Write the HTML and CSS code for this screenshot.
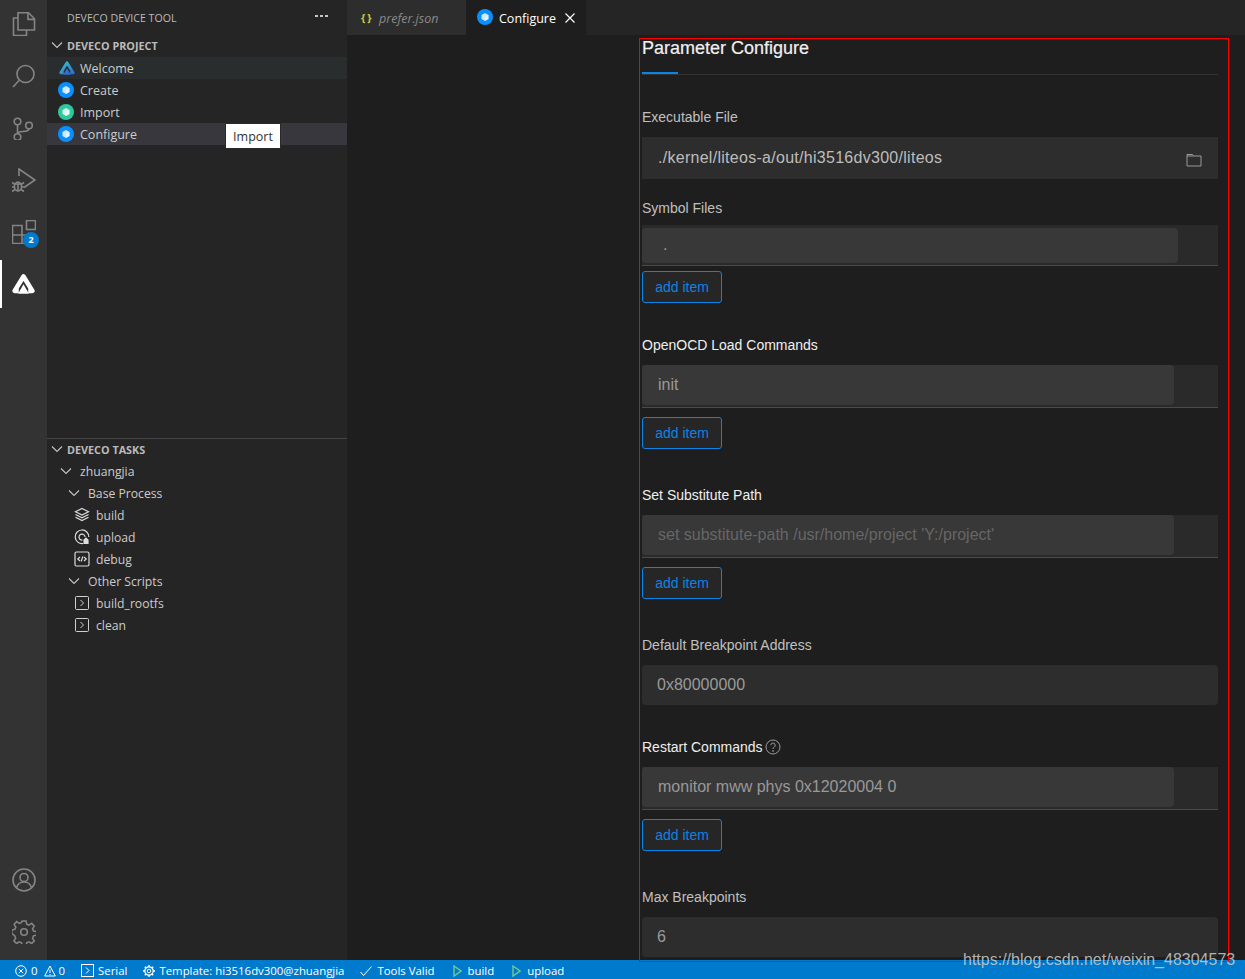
FILE: index.html
```html
<!DOCTYPE html>
<html lang="en">
<head>
<meta charset="utf-8">
<title>Configure</title>
<link rel="stylesheet" href="styles.css">
</head>
<body>
<svg class="defs" width="0" height="0" aria-hidden="true">
  <defs>
    <linearGradient id="logo-grad" x1="0" y1="0" x2="1" y2="1">
      <stop offset="0" stop-color="#35c2c9"/>
      <stop offset="1" stop-color="#2f6fd6"/>
    </linearGradient>
    <symbol id="cube" viewBox="0 0 16 16">
      <path d="M8 4l3.500 2v4L8 12 4.500 10V6z" fill="#fff" fill-opacity=".8"/>
      <path d="M8 8l3.500-2v4L8 12z" fill="#fff" fill-opacity=".45"/>
    </symbol>
    <symbol id="chev" viewBox="0 0 16 16">
      <path d="M3 5.500l5 5 5-5" fill="none" stroke="#c5c5c5" stroke-width="1.100"/>
    </symbol>
    <symbol id="script" viewBox="0 0 16 16">
      <rect x="1.500" y="1.500" width="13" height="13" rx="1" fill="none" stroke="#d0d0d0"/>
      <path d="M6.500 5l3 3-3 3" fill="none" stroke="#d0d0d0"/>
    </symbol>
  </defs>
</svg>
<div class="app">
  <nav class="activity">
    <div class="act-group">
      <div class="act-item">
        <svg class="act-icon" viewBox="0 0 24 24"><path d="M6 6H1.500v17.500h13V18"/><path d="M6 .8h10.500l6 6V18H6z"/><path d="M16 .8v6.600h6.500"/></svg>
      </div>
      <div class="act-item">
        <svg class="act-icon" viewBox="0 0 24 24"><circle cx="13.500" cy="10" r="8.500"/><path d="M7.500 16L1 23"/></svg>
      </div>
      <div class="act-item">
        <svg class="act-icon" viewBox="0 0 24 24"><circle cx="5.500" cy="5.500" r="3.300"/><circle cx="5.500" cy="21" r="3.300"/><circle cx="17" cy="9.500" r="3.300"/><path d="M5.500 8.800v8.900"/><path d="M17 12.800c0 4.600-11.500 1-11.500 5"/></svg>
      </div>
      <div class="act-item">
        <svg class="act-icon" viewBox="0 0 24 24"><path d="M7 8V1l16 11-11 7.500"/><ellipse cx="6" cy="18.500" rx="3.600" ry="4.400"/><path d="M0 14.500l3 2M12 14.500l-3 2M0 19h2.500M12 19H9.500M0 23.500l3-2M12 23.500l-3-2M2.500 16h7M6 16v7"/></svg>
      </div>
      <div class="act-item act-ext">
        <svg class="act-icon" viewBox="0 0 24 24"><path d="M.5 5.500h9.500v9.500H.5zM.5 15h9.500v8.500H.5zM10 15h9.500v8.500H10z"/><rect x="14.500" y=".5" width="9" height="9"/></svg>
        <span class="badge">2</span>
      </div>
      <div class="act-item is-active">
        <svg class="act-logo" viewBox="1 1.500 22 18.500"><path d="M7.500 17.300H3.500L12 3.500 20.500 17.300H16.500" fill="none" stroke="#fff" stroke-width="4.400" stroke-linejoin="round"/><path d="M12 11l5.200 9H6.800z" fill="#fff"/></svg>
      </div>
    </div>
    <div class="act-group">
      <div class="act-item">
        <svg class="act-icon" viewBox="0 0 24 24"><circle cx="12" cy="12" r="11"/><circle cx="12" cy="9.500" r="4"/><path d="M4.500 20c1-4 4-6 7.500-6s6.500 2 7.500 6"/></svg>
      </div>
      <div class="act-item">
        <svg class="act-icon" viewBox="0 0 24 24"><path d="M10 1h4l.7 3.300 2.300 1 2.900-1.800 2.700 2.800-1.800 2.800 1 2.400 3.200.7v3.600l-3.200.7-1 2.400 1.800 2.800-2.700 2.800-2.900-1.800-2.300 1-.7 3.200h-4l-.7-3.200-2.300-1-2.900 1.800-2.700-2.800 1.800-2.800-1-2.400L-.8 14v-3.600l3.200-.7 1-2.400-1.800-2.800 2.700-2.800L7 3.500l2.300-1z" transform="translate(0 -.4) scale(.96) translate(.6 .4)"/><circle cx="12" cy="12" r="3.300"/></svg>
      </div>
    </div>
  </nav>

  <aside class="sidebar">
    <header class="side-title">
      <span>DEVECO DEVICE TOOL</span>
      <span class="dots"><i></i><i></i><i></i></span>
    </header>
    <section class="pane pane-project">
      <div class="pane-head"><svg class="chev"><use href="#chev"/></svg>DEVECO PROJECT</div>
      <div class="row row-l1 is-hover">
        <svg class="logo-small" viewBox="1 1.500 22 18.500"><path d="M7.500 17.300H3.500L12 3.500 20.500 17.300H16.500" fill="none" stroke="url(#logo-grad)" stroke-width="4" stroke-linejoin="round"/><path d="M12 11l5.200 9H6.800z" fill="#2f6fd6"/></svg>
        <span>Welcome</span>
      </div>
      <div class="row row-l1">
        <span class="dot dot-blue"><svg><use href="#cube"/></svg></span><span>Create</span>
      </div>
      <div class="row row-l1">
        <span class="dot dot-green"><svg><use href="#cube"/></svg></span><span>Import</span>
      </div>
      <div class="row row-l1 is-selected">
        <span class="dot dot-blue"><svg><use href="#cube"/></svg></span><span>Configure</span>
      </div>
    </section>
    <section class="pane pane-tasks">
      <div class="pane-head"><svg class="chev"><use href="#chev"/></svg>DEVECO TASKS</div>
      <div class="row row-t1"><svg class="chev"><use href="#chev"/></svg><span>zhuangjia</span></div>
      <div class="row row-t2"><svg class="chev"><use href="#chev"/></svg><span>Base Process</span></div>
      <div class="row row-t3">
        <svg class="task-icon" viewBox="0 0 16 16"><path d="M8 1.500l6.500 3.300L8 8 1.500 4.800zM1.500 7.500L8 10.800l6.500-3.300M1.500 10.300L8 13.600l6.500-3.300"/></svg>
        <span>build</span>
      </div>
      <div class="row row-t3">
        <svg class="task-icon" viewBox="0 0 16 16"><path d="M9 14.500A6.800 6.800 0 1 1 14.800 8"/><path d="M8.500 11A3 3 0 1 1 11 8"/><path d="M10 11l2-2 2 2v3.500h-4z" class="task-fill"/></svg>
        <span>upload</span>
      </div>
      <div class="row row-t3">
        <svg class="task-icon" viewBox="0 0 16 16"><rect x="1" y="1" width="14" height="14" rx="1.500"/><path d="M6 6L3.800 8 6 10M10 6l2.200 2L10 10M8.800 5.500L7.200 10.500"/></svg>
        <span>debug</span>
      </div>
      <div class="row row-t2"><svg class="chev"><use href="#chev"/></svg><span>Other Scripts</span></div>
      <div class="row row-t3"><svg class="script-icon"><use href="#script"/></svg><span>build_rootfs</span></div>
      <div class="row row-t3"><svg class="script-icon"><use href="#script"/></svg><span>clean</span></div>
    </section>
    <div class="tooltip">Import</div>
  </aside>

  <main class="editor">
    <div class="tabs">
      <div class="tab tab-preview"><span class="braces">{ }</span><span class="tab-name">prefer.json</span></div>
      <div class="tab tab-active">
        <span class="dot dot-blue"><svg><use href="#cube"/></svg></span>
        <span class="tab-name">Configure</span>
        <svg class="close" viewBox="0 0 12 12"><path d="M1.500 1.500l9 9M10.500 1.500l-9 9"/></svg>
      </div>
    </div>
    <div class="form">
      <div class="form-head">
        <h1>Parameter Configure</h1>
        <div class="ink"></div>
      </div>

      <div class="label label-first label-dim">Executable File</div>
      <div class="input input-tall">
        <span class="value-bright">./kernel/liteos-a/out/hi3516dv300/liteos</span>
        <svg class="folder" viewBox="0 0 16 14"><path d="M1 1.500h5.500l1.200 1.500H15v10H1zM1 3h6.700"/></svg>
      </div>

      <div class="label label-symbol label-dim">Symbol Files</div>
      <div class="array array-short"><div class="array-input">.</div></div>
      <button class="add add-short" type="button">add item</button>

      <div class="label label-tight label-bright">OpenOCD Load Commands</div>
      <div class="array"><div class="array-input">init</div></div>
      <button class="add" type="button">add item</button>

      <div class="label label-bright">Set Substitute Path</div>
      <div class="array"><div class="array-input is-placeholder">set substitute-path /usr/home/project 'Y:/project'</div></div>
      <button class="add" type="button">add item</button>

      <div class="label label-dim">Default Breakpoint Address</div>
      <div class="input">0x80000000</div>

      <div class="label label-tight label-bright label-help">Restart Commands
        <svg class="help" viewBox="0 0 16 16"><circle cx="8" cy="8" r="7"/><path d="M5.800 6.200a2.200 2.200 0 1 1 3.400 1.900c-.8.500-1.200.9-1.200 1.900"/><circle cx="8" cy="12" r=".5"/></svg>
      </div>
      <div class="array"><div class="array-input">monitor mww phys 0x12020004 0</div></div>
      <button class="add" type="button">add item</button>

      <div class="label label-dim">Max Breakpoints</div>
      <div class="input">6</div>
    </div>
  </main>

  <footer class="status">
    <svg class="st-icon st-err" viewBox="0 0 12 12"><circle cx="6" cy="6" r="5.300"/><path d="M3.800 3.800l4.400 4.400M8.200 3.800L3.800 8.200"/></svg>
    <span class="st-num">0</span>
    <svg class="st-icon st-warn" viewBox="0 0 12 12"><path d="M6 1l5.300 10H.7zM6 4.500v3.500M6 9v1"/></svg>
    <span class="st-num">0</span>
    <svg class="st-icon st-serial" viewBox="0 0 13 13"><rect x=".5" y=".5" width="12" height="12"/><path d="M5 3.500l3 3-3 3"/></svg>
    <span>Serial</span>
    <svg class="st-icon st-gear" viewBox="0 0 12 12"><circle cx="6" cy="6" r="1.800"/><circle cx="6" cy="6" r="4.200" stroke-width="1.200"/><path d="M6 0v2M6 10v2M0 6h2M10 6h2M1.800 1.800l1.400 1.400M8.800 8.800l1.400 1.400M10.200 1.800L8.800 3.200M3.200 8.800l-1.400 1.400" stroke-width="1.400"/></svg>
    <span>Template: hi3516dv300@zhuangjia</span>
    <svg class="st-icon st-check" viewBox="0 0 12 12"><path d="M.5 7l3 3.500L11.500 1.500"/></svg>
    <span>Tools Valid</span>
    <svg class="st-icon st-play st-play-first" viewBox="0 0 9 12"><path d="M1 1l7 5-7 5z"/></svg>
    <span>build</span>
    <svg class="st-icon st-play" viewBox="0 0 9 12"><path d="M1 1l7 5-7 5z"/></svg>
    <span>upload</span>
  </footer>
</div>
<div class="annotation"></div>
<div class="watermark">https://blog.csdn.net/weixin_48304573</div>
</body>
</html>
```
FILE: styles.css
```css
* { box-sizing: border-box; }
html, body { margin: 0; height: 100%; overflow: hidden; background: #1e1e1e; }
.defs { position: absolute; }
svg { display: block; flex: none; }

.app {
  display: grid;
  grid-template-columns: 47px 300px 1fr;
  grid-template-rows: 960px 19px;
  width: 1245px;
  height: 979px;
  font-family: "Open Sans", "Noto Sans", sans-serif;
  color: #cccccc;
}

/* activity bar */
.activity {
  background: #333333;
  display: flex;
  flex-direction: column;
  justify-content: space-between;
  padding-bottom: 4px;
}
.act-group { display: flex; flex-direction: column; gap: 4px; }
.act-item {
  position: relative;
  height: 48px;
  display: flex;
  align-items: center;
  justify-content: center;
}
.act-item.is-active { box-shadow: inset 2px 0 0 #fff; }
.act-icon {
  width: 24px;
  height: 24px;
  fill: none;
  stroke: #858585;
  stroke-width: 1.6;
}
.act-logo { width: 23px; height: 20px; }
.badge {
  position: absolute;
  left: 23px;
  top: 24px;
  width: 16px;
  height: 16px;
  border-radius: 50%;
  background: #007acc;
  color: #fff;
  font-size: 9px;
  font-weight: 700;
  line-height: 16px;
  text-align: center;
}

/* side bar */
.sidebar {
  position: relative;
  background: #252526;
  display: flex;
  flex-direction: column;
  font-size: 12.5px;
}
.side-title {
  height: 35px;
  padding: 0 19px 0 20px;
  display: flex;
  align-items: center;
  justify-content: space-between;
  font-size: 10.6px;
  color: #bbbbbb;
}
.dots { display: flex; gap: 2px; margin-top: -3px; }
.dots i { width: 3px; height: 2px; background: #c5c5c5; }
.pane-project { height: 404px; border-bottom: 1px solid #444444; }
.pane-head {
  height: 22px;
  display: flex;
  align-items: center;
  font-size: 10.8px;
  font-weight: 700;
  color: #bbbbbb;
  padding: 0 0 2px 2px;
}
.pane-tasks .pane-head { margin-bottom: -1px; }
.pane-tasks .row { font-size: 12.2px; }
.pane-head .chev { margin-right: 2px; }
.chev { width: 16px; height: 16px; }
.row {
  height: 22px;
  display: flex;
  align-items: center;
  color: #cccccc;
}
.row-l1 { padding-left: 11px; }
.row-l1 > span:last-child { margin-left: 6px; }
.row-t1 { padding-left: 11px; }
.row-t1 span { margin-left: 6px; }
.row-t2 { padding-left: 19px; }
.row-t2 span { margin-left: 6px; }
.row-t3 { padding-left: 27px; }
.row-t3 span { margin-left: 6px; }
.is-hover { background: #2a2d2e; }
.is-selected { background: #37373d; }
.logo-small { width: 16px; height: 14px; margin-left: 1px; }
.row-l1.is-hover > span:last-child { margin-left: 5px; }
.dot {
  width: 16px;
  height: 16px;
  border-radius: 50%;
  display: flex;
  flex: none;
}
.dot svg { width: 16px; height: 16px; }
.dot-blue { background: #0a8fff; }
.dot-green { background: #2fc79c; }
.task-icon {
  width: 16px;
  height: 16px;
  fill: none;
  stroke: #dcdcdc;
  stroke-width: 1.2;
}
.task-fill { fill: #dcdcdc; }
.script-icon { width: 16px; height: 16px; }
.tooltip {
  position: absolute;
  left: 178px;
  top: 123px;
  width: 56px;
  height: 26px;
  background: #fff;
  color: #333;
  border: 1px solid #2a2a2a;
  font-size: 12.5px;
  line-height: 25px;
  text-align: center;
}

/* editor */
.editor {
  background: #1e1e1e;
  min-width: 0;
  overflow: hidden;
}
.tabs {
  height: 35px;
  background: #252526;
  display: flex;
  font-size: 12.5px;
}
.tab {
  width: 120px;
  display: flex;
  align-items: center;
}
.tab-name { padding-top: 2px; }
.tab-preview {
  width: 119px;
  background: #2d2d2d;
  padding-left: 14px;
  color: #8a8a8a;
  font-style: italic;
}
.braces {
  color: #cbcb41;
  font-weight: 700;
  font-style: normal;
  font-size: 11px;
  width: 18px;
  white-space: pre;
  letter-spacing: -.5px;
}
.tab-active {
  width: 120px;
  background: #1e1e1e;
  color: #ffffff;
  padding-left: 11px;
}
.tab-active .dot { margin-bottom: 2px; }
.tab-active .tab-name { margin-left: 6px; }
.close {
  width: 12px;
  height: 12px;
  margin-left: 8px;
  fill: none;
  stroke: #fff;
  stroke-width: 1.2;
}

/* form */
.form {
  width: 576px;
  margin-left: 295px;
  padding-top: 4px;
  font-family: "Liberation Sans", Arial, sans-serif;
}
.form-head { border-bottom: 1px solid #333333; height: 36px; }
.form-head h1 {
  margin: 0;
  font-size: 18px;
  line-height: 18px;
  font-weight: 400;
  color: #f0f0f0;
  -webkit-text-stroke: .2px #f0f0f0;
  height: 33px;
}
.ink { width: 36px; height: 2px; background: #0a84e6; }
.label {
  height: 20px;
  line-height: 20px;
  font-size: 14px;
  margin-top: 36px;
  margin-bottom: 10px;
}
.label-first { margin-top: 32px; }
.label-tight { margin-top: 32px; }
.label-symbol { margin-top: 19px; margin-bottom: 7px; }
.label-dim { color: #c0c0c0; }
.label-bright { color: #efefef; }
.label-help { display: flex; align-items: center; gap: 2px; }
.help {
  width: 16px;
  height: 16px;
  fill: none;
  stroke: #9a9a9a;
  stroke-width: 1;
}
.input {
  height: 40px;
  background: #2d2d2d;
  border-radius: 4px;
  padding: 0 15px;
  display: flex;
  align-items: center;
  font-size: 16px;
  color: #9a9a9a;
}
.input-tall {
  height: 42px;
  border-radius: 0;
  justify-content: space-between;
  padding: 0 16px 0 16px;
}
.value-bright { color: #bdbdbd; letter-spacing: .28px; }
.folder {
  width: 16px;
  height: 14px;
  margin-top: 4px;
  fill: none;
  stroke: #9a9a9a;
  stroke-width: 1;
}
.array {
  height: 43px;
  background: #2a2a2a;
  border-bottom: 1px solid #4a4a4a;
}
.array-input {
  width: 532px;
  height: 40px;
  border-radius: 4px;
  background: #383838;
  padding-left: 16px;
  font-size: 16px;
  line-height: 40px;
  color: #999999;
}
.array-input.is-placeholder { color: #666666; }
.array-short { height: 41px; padding-top: 3px; }
.array-short .array-input { width: 536px; height: 35px; padding-left: 21px; line-height: 34px; }
.add {
  display: block;
  width: 80px;
  height: 32px;
  margin-top: 9px;
  padding: 0;
  background: #262626;
  border: 1px solid #0a84e6;
  border-radius: 3px;
  color: #0a84e6;
  font: 14px/30px "Liberation Sans", Arial, sans-serif;
}
.add-short { margin-top: 5px; }

/* status bar */
.status {
  grid-column: 1 / -1;
  background: #007acc;
  color: #fff;
  display: flex;
  align-items: center;
  padding: 2px 0 0 15px;
  font-size: 11.4px;
  white-space: nowrap;
}
.st-icon {
  fill: none;
  stroke: #fff;
  stroke-width: 1;
  width: 12px;
  height: 12px;
  margin-right: 4px;
}
.st-num { margin-right: 6px; }
.st-warn { margin-right: 3px; }
.st-serial { width: 13px; height: 13px; margin-left: 10px; margin-right: 4px; }
.st-gear { margin-left: 16px; }
.st-check { margin-left: 16px; margin-right: 5px; }
.st-play {
  width: 9px;
  stroke: #72c892;
  stroke-width: 1.4;
  margin-left: 18px;
  margin-right: 6px;
}

/* overlays baked into the screenshot */
.annotation {
  position: absolute;
  left: 639px;
  top: 38px;
  width: 590px;
  height: 924px;
  border: 1px solid #ff0000;
  pointer-events: none;
}
.watermark {
  position: absolute;
  left: 963px;
  top: 951px;
  font: 16px/18px "Liberation Sans", Arial, sans-serif;
  color: rgba(205, 205, 205, .85);
  white-space: nowrap;
}
```
